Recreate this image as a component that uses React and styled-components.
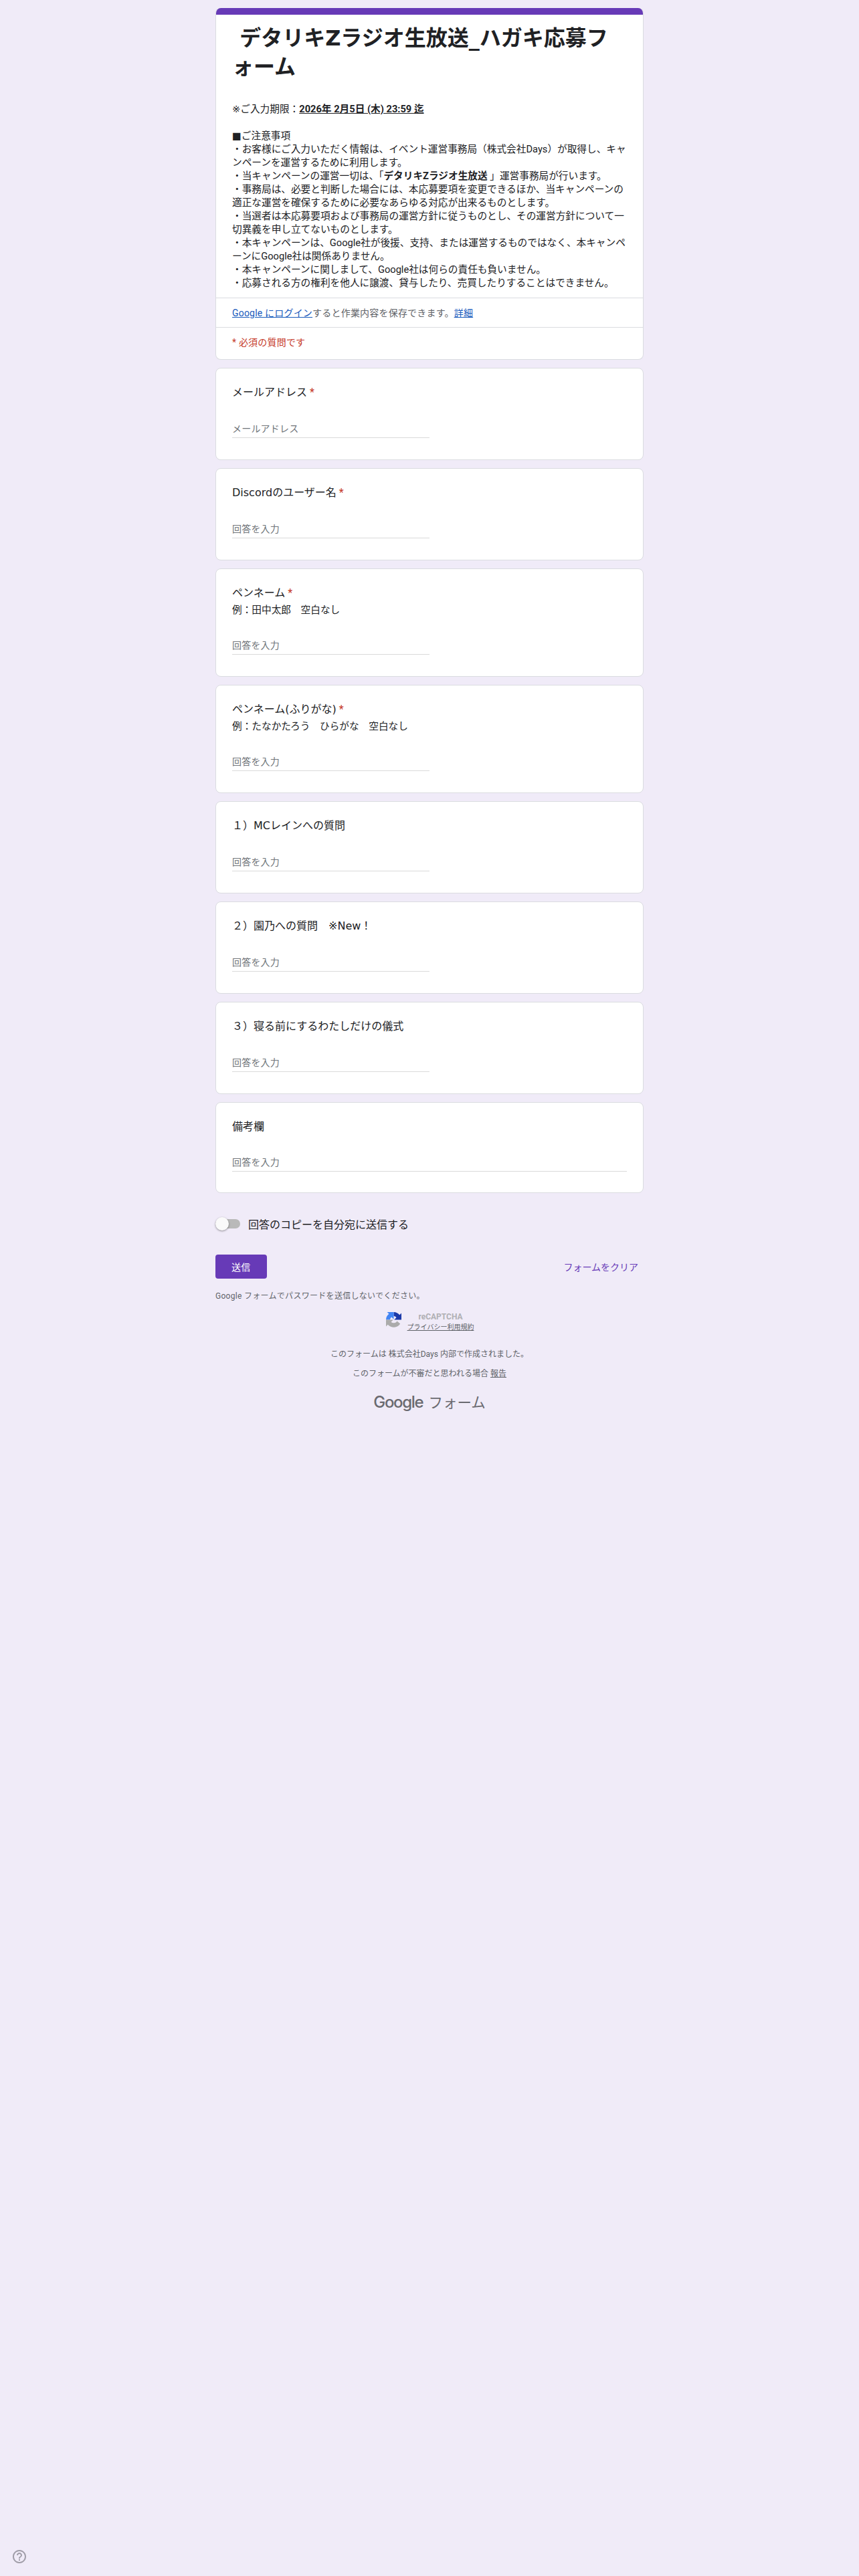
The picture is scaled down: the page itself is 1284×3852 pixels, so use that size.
import styled, { createGlobalStyle } from "styled-components";

const GlobalStyle = createGlobalStyle`
  * {
    box-sizing: border-box;
  }

  body {
    margin: 0;
    background-color: #f0ebf8;
    color: #202124;
    font-family: Roboto, "DejaVu Sans", "Noto Sans CJK JP", sans-serif;
  }

  p, h1, h2 {
    margin: 0;
    font-weight: 400;
  }
`;

const Page = styled.div`
  display: flex;
  flex-direction: column;
  min-height: 100vh;
  padding-top: 12px;
`;

const Form = styled.form`
  width: 640px;
  margin: 0 auto;
`;

const Card = styled.div`
  background-color: white;
  border: 1px solid #dadce0;
  border-radius: 8px;
  margin-bottom: 12px;
`;

const HeaderCard = styled(Card)`
  border-top: 0;
  overflow: hidden;
`;

const ColorBar = styled.div`
  height: 10px;
  margin: 0 -1px;
  background-color: #673ab7;
`;

const HeaderBody = styled.div`
  padding: 14px 24px 12px;
`;

const Title = styled.h1`
  font-family: "DejaVu Sans", "Noto Sans CJK JP", sans-serif;
  font-size: 32px;
  font-weight: 700;
  line-height: 43.2px;
  white-space: pre-wrap;
`;

const Description = styled.div`
  margin-top: 31px;
  font-size: 14.667px;
  line-height: 20px;
  white-space: pre-wrap;
`;

const HeaderRow = styled.div`
  height: ${(props) => props.$height}px;
  padding: 12px 24px;
  border-top: 1px solid #dadce0;
  color: ${(props) => props.$color};
  font-size: 14px;
  letter-spacing: 0.2px;
  line-height: 20px;

  a {
    color: #185abc;
    text-decoration: underline;
  }
`;

const QuestionCard = styled(Card)`
  height: ${(props) => props.$height}px;
  padding: 23px 24px;
`;

const Label = styled.h2`
  height: 24px;
  font-family: "DejaVu Sans", "Noto Sans CJK JP", sans-serif;
  font-size: 16px;
  line-height: 26px;

  span {
    color: #c53929;
    font-family: Roboto, sans-serif;
  }
`;

const Hint = styled.p`
  margin-top: 4px;
  font-size: 14.667px;
  line-height: 20px;
`;

const Input = styled.input`
  display: block;
  width: ${(props) => (props.$wide ? "100%" : "50%")};
  height: 32px;
  margin-top: ${(props) => props.$gap}px;
  padding: 5px 0 0;
  border: 0;
  border-bottom: 1px solid #dadada;
  border-radius: 0;
  background: transparent;
  font-family: Roboto, "Noto Sans CJK JP", sans-serif;
  font-size: 14px;
  letter-spacing: 0.2px;

  &::placeholder {
    color: #70757a;
  }
`;

const CopyRow = styled.div`
  display: flex;
  align-items: center;
  height: 24px;
  margin-top: 34px;
  font-size: 16px;
`;

const Track = styled.div`
  display: flex;
  align-items: center;
  width: 37px;
  height: 14px;
  margin-right: 12px;
  border-radius: 7px;
  background-color: #b9b9b9;
`;

const Thumb = styled.div`
  width: 20px;
  height: 20px;
  flex-shrink: 0;
  border-radius: 50%;
  background-color: #fafafa;
  box-shadow: 0 1px 3px rgba(0, 0, 0, 0.4);
`;

const Actions = styled.div`
  display: flex;
  align-items: center;
  justify-content: space-between;
  margin-top: 34px;
`;

const Button = styled.button`
  height: 36px;
  padding: ${(props) => (props.$primary ? "0 24px" : "0 8px")};
  border: 0;
  border-radius: 4px;
  background-color: ${(props) => (props.$primary ? "#673ab7" : "transparent")};
  color: ${(props) => (props.$primary ? "white" : "#673ab7")};
  font-family: Roboto, "Noto Sans CJK JP", sans-serif;
  font-size: 14px;
  font-weight: 400;
  letter-spacing: ${(props) => (props.$primary ? "0.25px" : "0")};
`;

const Small = styled.p`
  margin-top: ${(props) => props.$gap}px;
  color: #5f6368;
  font-size: 12px;
  letter-spacing: ${(props) => props.$spacing || 0}px;
  line-height: 16px;
  text-align: ${(props) => props.$align || "left"};

  a {
    color: inherit;
    text-decoration: underline;
  }
`;

const Recaptcha = styled.div`
  display: flex;
  justify-content: center;
  gap: 9px;
  margin-top: 16px;
  padding-left: 1px;
`;

const RecaptchaText = styled.div`
  display: flex;
  flex-direction: column;
  align-items: center;

  b {
    color: #b0b0b4;
    font-size: 12px;
    font-weight: 700;
    line-height: 15px;
  }

  a {
    color: #5f6368;
    font-size: 10px;
    line-height: 15px;
    text-decoration: underline;
  }
`;

const Logo = styled.div`
  display: flex;
  align-items: baseline;
  justify-content: center;
  gap: 8px;
  height: 32px;
  margin-top: 19px;
  color: #6a6a70;
  font-size: 21.5px;
  line-height: 32px;

  span {
    font-family: Inter, sans-serif;
    font-size: 24px;
    font-weight: 500;
    letter-spacing: -1.3px;
  }
`;

const HelpButton = styled.div`
  width: 24px;
  height: 24px;
  margin: auto 0 17px 17px;
`;

const questions = [
  { label: "メールアドレス", placeholder: "メールアドレス", required: true },
  { label: "Discordのユーザー名", required: true },
  { label: "ペンネーム", hint: "例：田中太郎　空白なし", required: true },
  {
    label: "ペンネーム(ふりがな)",
    hint: "例：たなかたろう　ひらがな　空白なし",
    required: true,
  },
  { label: "１）MCレインへの質問" },
  { label: "２）園乃への質問　※New！" },
  { label: "３）寝る前にするわたしだけの儀式" },
  { label: "備考欄", wide: true },
];

function Question({ label, hint, placeholder = "回答を入力", required, wide }) {
  return (
    <QuestionCard $height={hint ? 162 : wide ? 136 : 138}>
      <Label>
        {label}
        {required && <span> *</span>}
      </Label>
      {hint && <Hint>{hint}</Hint>}
      <Input placeholder={placeholder} $wide={wide} $gap={wide ? 24 : 25} />
    </QuestionCard>
  );
}

export default function App() {
  return (
    <Page lang="ja">
      <GlobalStyle />
      <Form>
        <HeaderCard>
          <ColorBar />
          <HeaderBody>
            <Title>{" デタリキZラジオ生放送_ハガキ応募フォーム"}</Title>
            <Description>
              ※ご入力期限：
              <b>
                <u>2026年 2月5日 (木) 23:59 迄</u>
              </b>
              {"\n\n■ご注意事項\n"}
              {
                "・お客様にご入力いただく情報は、イベント運営事務局（株式会社Days）が取得し、キャンペーンを運営するために利用します。\n"
              }
              {"・当キャンペーンの運営一切は、「"}
              <b>{"デタリキZラジオ生放送 "}</b>
              {"」運営事務局が行います。\n"}
              {
                "・事務局は、必要と判断した場合には、本応募要項を変更できるほか、当キャンペーンの適正な運営を確保するために必要なあらゆる対応が出来るものとします。\n"
              }
              {
                "・当選者は本応募要項および事務局の運営方針に従うものとし、その運営方針について一切異義を申し立てないものとします。\n"
              }
              {
                "・本キャンペーンは、Google社が後援、支持、または運営するものではなく、本キャンペーンにGoogle社は関係ありません。\n"
              }
              {"・本キャンペーンに関しまして、Google社は何らの責任も負いません。\n"}
              {
                "・応募される方の権利を他人に譲渡、貸与したり、売買したりすることはできません。"
              }
            </Description>
          </HeaderBody>
          <HeaderRow $height={44} $color="#5f6368">
            <a>Google にログイン</a>すると作業内容を保存できます。<a>詳細</a>
          </HeaderRow>
          <HeaderRow $height={48} $color="#c53929">
            * 必須の質問です
          </HeaderRow>
        </HeaderCard>

        {questions.map((q) => (
          <Question key={q.label} {...q} />
        ))}

        <CopyRow>
          <Track>
            <Thumb />
          </Track>
          回答のコピーを自分宛に送信する
        </CopyRow>

        <Actions>
          <Button type="button" $primary>
            送信
          </Button>
          <Button type="button">フォームをクリア</Button>
        </Actions>

        <Small $gap={18} $spacing={0.3}>
          Google フォームでパスワードを送信しないでください。
        </Small>

        <Recaptcha>
          <svg width="23" height="23" viewBox="0 0 64 64">
            <path
              fill="#1c3aa9"
              d="M64 32V4.500l-7.600 7.600A32 32 0 0 0 32 0v17c4.500 0 8.500 2.500 11 6l-9 9z"
            />
            <path
              fill="#4285f4"
              d="M32 0H4.500l7.600 7.600A32 32 0 0 0 0 32h17c0-4.500 2.500-8.500 6-11l9 9z"
            />
            <path
              fill="#ababab"
              d="M0 32v27.500l7.600-7.600A32 32 0 0 0 59 49L46 37.500A16 16 0 0 1 21 41l9-9z"
            />
          </svg>
          <RecaptchaText>
            <b>reCAPTCHA</b>
            <a>プライバシー利用規約</a>
          </RecaptchaText>
        </Recaptcha>

        <Small $gap={25} $align="center">
          このフォームは 株式会社Days 内部で作成されました。
        </Small>
        <Small $gap={13} $align="center">
          このフォームが不審だと思われる場合 <a>報告</a>
        </Small>

        <Logo>
          <span>Google</span>
          フォーム
        </Logo>
      </Form>

      <HelpButton>
        <svg width="24" height="24" viewBox="0 0 24 24" fill="#a09da8">
          <path d="M11 18h2v-2h-2v2zm1-16C6.480 2 2 6.480 2 12s4.480 10 10 10 10-4.480 10-10S17.520 2 12 2zm0 18c-4.410 0-8-3.590-8-8s3.590-8 8-8 8 3.590 8 8-3.590 8-8 8zm0-14c-2.210 0-4 1.790-4 4h2c0-1.100.9-2 2-2s2 .9 2 2c0 2-3 1.750-3 5h2c0-2.250 3-2.500 3-5 0-2.210-1.790-4-4-4z" />
        </svg>
      </HelpButton>
    </Page>
  );
}
